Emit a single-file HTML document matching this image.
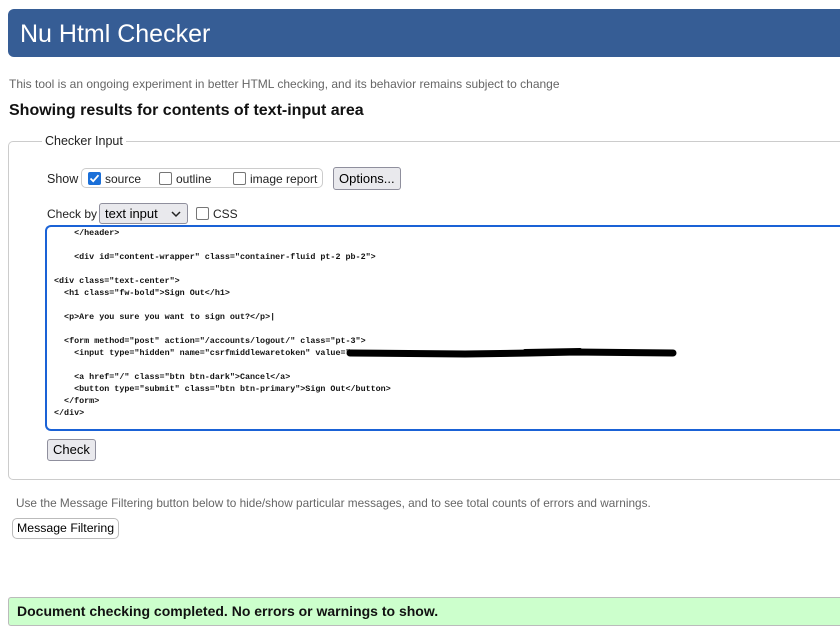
<!DOCTYPE html>
<html><head><meta charset="utf-8"><style>
*{box-sizing:border-box}
body{margin:0;width:840px;height:636px;overflow:hidden;background:#fff;font-family:"Liberation Sans",sans-serif;position:relative}
.a{position:absolute;white-space:nowrap}
.hdr{left:8px;top:9px;width:840px;height:48px;background:#365d95;border-radius:6px 0 0 6px}
.hdr span{position:absolute;left:12px;top:11px;color:#fff;font-size:25px}
.sm{font-size:12px;color:#666}
.btn{border:1px solid #8f8f9d;background:#e9e9ed;border-radius:3px;font-size:13px;color:#000;padding:0 5px}
.cb{display:inline-block;width:13px;height:13px;border:1.5px solid #767676;border-radius:2px;vertical-align:-2px;margin-right:4px}
.code{font-family:"Liberation Mono",monospace;font-size:8.4px;line-height:12px;color:#111;white-space:pre;font-weight:600}
</style></head><body>
<div class="a hdr"><span>Nu Html Checker</span></div>
<div class="a sm" style="left:9px;top:77px">This tool is an ongoing experiment in better HTML checking, and its behavior remains subject to change</div>
<div class="a" style="left:9px;top:102px;font-size:16px;font-weight:bold;color:#111">Showing results for contents of text-input area</div>
<div class="a" style="left:8px;top:141px;width:840px;height:339px;border:1px solid #ccc;border-right:none;border-radius:5px 0 0 5px"></div>
<div class="a" style="left:42px;top:134px;background:#fff;padding:0 3px;font-size:12.5px;color:#222">Checker Input</div>
<div class="a" style="left:47px;top:172px;font-size:12.5px;color:#222">Show</div>
<div class="a" style="left:81px;top:168px;width:242px;height:20px;border:1px solid #ccc;border-radius:5px"></div>
<div class="a" style="left:88px;top:172px;font-size:12px;color:#222"><span class="cb" style="background:#1a6fd8;border-color:#1a6fd8;position:relative"><svg width="11" height="11" viewBox="0 0 11 11" style="position:absolute;left:0;top:0"><path d="M1.5 5.5l2.7 2.7 5.3-6" stroke="#fff" stroke-width="1.8" fill="none"/></svg></span>source</div>
<div class="a" style="left:159px;top:172px;font-size:12px;color:#222"><span class="cb"></span>outline</div>
<div class="a" style="left:233px;top:172px;font-size:12px;color:#222"><span class="cb"></span>image report</div>
<div class="a btn" style="left:333px;top:167px;height:23px;line-height:21px">Options...</div>
<div class="a" style="left:47px;top:207px;font-size:12px;color:#222">Check by</div>
<div class="a btn" style="left:99px;top:203px;width:89px;height:21px;line-height:19px;border-radius:3px">text input<svg width="10" height="7" style="position:absolute;right:6px;top:7px"><path d="M1 1l4 4 4-4" stroke="#222" stroke-width="1.5" fill="none"/></svg></div>
<div class="a" style="left:196px;top:207px;font-size:12px;color:#222"><span class="cb"></span>CSS</div>
<div class="a" style="left:45px;top:225px;width:800px;height:206px;border:2px solid #1a62d6;border-right:none;border-radius:6px 0 0 6px"></div>
<div class="a code" style="left:54px;top:227px">    &lt;/header&gt;

    &lt;div id="content-wrapper" class="container-fluid pt-2 pb-2"&gt;

&lt;div class="text-center"&gt;
  &lt;h1 class="fw-bold"&gt;Sign Out&lt;/h1&gt;

  &lt;p&gt;Are you sure you want to sign out?&lt;/p&gt;|

  &lt;form method="post" action="/accounts/logout/" class="pt-3"&gt;
    &lt;input type="hidden" name="csrfmiddlewaretoken" value="                                                   &gt;

    &lt;a href="/" class="btn btn-dark"&gt;Cancel&lt;/a&gt;
    &lt;button type="submit" class="btn btn-primary"&gt;Sign Out&lt;/button&gt;
  &lt;/form&gt;
&lt;/div&gt;</div>
<svg class="a" style="left:345px;top:346px" width="335" height="14"><path d="M5 7 L120 8 L185 7 L230 6 L328 7" stroke="#000" stroke-width="7" stroke-linecap="round" fill="none"/><path d="M180 5 L235 4" stroke="#000" stroke-width="4" stroke-linecap="round"/></svg>
<div class="a btn" style="left:47px;top:439px;height:22px;line-height:20px">Check</div>
<div class="a sm" style="left:16px;top:496px;font-size:11.8px">Use the Message Filtering button below to hide/show particular messages, and to see total counts of errors and warnings.</div>
<div class="a btn" style="left:12px;top:518px;height:21px;line-height:19px;background:#fff;border-color:#bbb;border-radius:5px;font-size:12.3px;padding:0 4px">Message Filtering</div>
<div class="a" style="left:8px;top:597px;width:840px;height:29px;background:#ccffcc;border:1px solid #bbb;border-right:none;border-radius:3px 0 0 3px"></div>
<div class="a" style="left:17px;top:603px;font-size:14px;font-weight:bold;color:#111">Document checking completed. No errors or warnings to show.</div>
</body></html>
